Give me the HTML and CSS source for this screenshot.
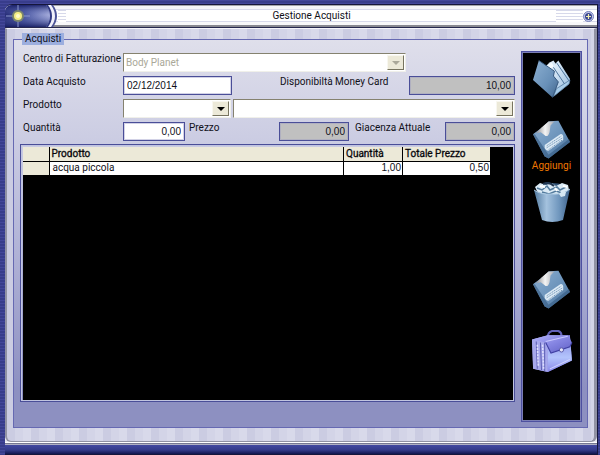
FILE: index.html
```html
<!DOCTYPE html>
<html lang="it">
<head>
<meta charset="utf-8">
<title>Gestione Acquisti</title>
<link rel="stylesheet" href="styles.css">
</head>
<body>
<svg class="defs" aria-hidden="true">
  <defs>
    <linearGradient id="steel" x1="0" y1="0" x2="1" y2="1">
      <stop offset="0" stop-color="#8db0d2"/><stop offset=".6" stop-color="#6890b8"/><stop offset="1" stop-color="#41658c"/>
    </linearGradient>
    <linearGradient id="paper" x1="0" y1="0" x2="1" y2="1">
      <stop offset="0" stop-color="#eef7ff"/><stop offset="1" stop-color="#92b9dc"/>
    </linearGradient>
    <linearGradient id="can" x1="0" y1="0" x2="1" y2="0">
      <stop offset="0" stop-color="#51799f"/><stop offset=".35" stop-color="#a4c2de"/><stop offset=".7" stop-color="#6f96bd"/><stop offset="1" stop-color="#3d618a"/>
    </linearGradient>
    <linearGradient id="shutter" x1="0" y1="0" x2="1" y2="0">
      <stop offset="0" stop-color="#8d8d92"/><stop offset=".5" stop-color="#f4f4f4"/><stop offset="1" stop-color="#a5a8b0"/>
    </linearGradient>
    <linearGradient id="leather" x1="0" y1="0" x2="1" y2="1">
      <stop offset="0" stop-color="#b4b4fb"/><stop offset=".5" stop-color="#8585e2"/><stop offset="1" stop-color="#5f5fc4"/>
    </linearGradient>
    <linearGradient id="front" x1="0" y1="0" x2="0" y2="1">
      <stop offset="0" stop-color="#8384e2"/><stop offset=".6" stop-color="#b3c4fc"/><stop offset="1" stop-color="#8a88ea"/>
    </linearGradient>
    <symbol id="floppy" viewBox="0 0 40 40">
      <path d="M1 14 L12 6 L17 1 L27 0 L39 22 L17 39 L13 37 Z" fill="url(#steel)"/>
      <path d="M1 14 L13 37 L17 39 L39 22 L38 19 L17 35 L3 14Z" fill="#385d85" opacity=".65"/>
      <path d="M10 7 L17 1 L23 1 L19 5 L18 12 Q16 18 13 15 L9 12 L4 13 Z" fill="url(#shutter)"/>
      <path d="M13 25 L29 14 Q31 13 32 16 L32 20 L17 31 Q14 31 13 28Z" fill="#dceaf5"/>
      <path d="M15 26 L30 16 M15 28 L31 18 M17 30 L31 20" stroke="#7799b8" stroke-width="1" stroke-dasharray="1.5 .7"/>
    </symbol>
  </defs>
</svg>
<div class="window">
  <header class="titlebar">
    <svg class="orb" viewBox="0 0 53 22" aria-hidden="true">
      <defs>
        <linearGradient id="orbfill" x1="0" y1="0" x2="1" y2="0">
          <stop offset="0" stop-color="#252b76"/><stop offset=".45" stop-color="#4e5ba5"/><stop offset="1" stop-color="#a6addc"/>
        </linearGradient>
        <linearGradient id="orbshade" x1="0" y1="0" x2="0" y2="1">
          <stop offset="0" stop-color="#161c64" stop-opacity=".9"/><stop offset=".45" stop-color="#6977be" stop-opacity="0"/><stop offset="1" stop-color="#141b60" stop-opacity=".9"/>
        </linearGradient>
      </defs>
      <path d="M0 0H48Q56 11 48 22H0Z" fill="#4b5397"/>
      <path d="M0 0H46Q54 11 46 22H0Z" fill="#f0f0fa"/>
      <path d="M0 0H43Q51 11 43 22H0Z" fill="#303982"/>
      <path d="M0 22V8Q1 0 8 0H41Q49 11 41 22Z" fill="url(#orbfill)"/>
      <path d="M0 22V8Q1 0 8 0H41Q49 11 41 22Z" fill="url(#orbshade)"/>
      <path d="M1 11H25M13 0V22" stroke="#8c98cb" stroke-width="1"/>
      <circle cx="13" cy="11" r="6" fill="#7b866f"/>
      <circle cx="13" cy="11" r="4" fill="#f5ee83"/>
      <circle cx="13" cy="11" r="2" fill="#fffcc9"/>
    </svg>
    <h1 class="title">Gestione Acquisti</h1>
    <button class="close" type="button" aria-label="Chiudi">
      <svg viewBox="0 0 11 11"><circle cx="5.500" cy="5.500" r="5" fill="#c4caea" stroke="#7780b8"/><circle cx="5.500" cy="5.500" r="3.500" fill="#39458f"/><path d="M3 5.500h5M5.500 3v5" stroke="#f4f0b0" stroke-width="1.200"/></svg>
    </button>
  </header>
  <main class="client">
    <fieldset class="panel">
      <legend>Acquisti</legend>
      <div class="columns">
        <div class="content">
          <form class="form">
            <div class="row">
              <label class="name" for="centro">Centro di Fatturazione</label>
              <span class="combo wide disabled"><select id="centro" disabled><option>Body Planet</option></select></span>
            </div>
            <div class="row">
              <label class="name" for="data">Data Acquisto</label>
              <input class="box date" id="data" value="02/12/2014">
              <label class="money" for="card">Disponibiltà Money Card</label>
              <input class="box number last" id="card" value="10,00" readonly>
            </div>
            <div class="row">
              <label class="name" for="codice">Prodotto</label>
              <span class="combo code"><select id="codice"><option></option></select></span>
              <span class="combo product"><select aria-label="Descrizione prodotto"><option></option></select></span>
            </div>
            <div class="row">
              <label class="name" for="qta">Quantità</label>
              <input class="box number quantity" id="qta" value="0,00">
              <label class="price" for="prezzo">Prezzo</label>
              <input class="box number amount" id="prezzo" value="0,00" readonly>
              <label class="stock" for="giacenza">Giacenza Attuale</label>
              <input class="box number last" id="giacenza" value="0,00" readonly>
            </div>
          </form>
          <div class="datagrid">
            <table>
              <colgroup><col class="c-mark"><col class="c-name"><col class="c-qty"><col class="c-total"></colgroup>
              <thead><tr><th></th><th>Prodotto</th><th>Quantità</th><th>Totale Prezzo</th></tr></thead>
              <tbody><tr><th></th><td>acqua piccola</td><td class="num">1,00</td><td class="num">0,50</td></tr></tbody>
            </table>
          </div>
        </div>
        <nav class="toolbar" aria-label="Comandi">
          <button type="button" aria-label="Apri">
            <svg viewBox="0 0 40 40">
              <path d="M13 8 L18 3 L22 1 L37 22 L22 37Z" fill="url(#paper)"/>
              <path d="M16 6 L20 3 L33 25 L22 36Z" fill="#f5fbff"/>
              <path d="M19 10 L27 1 L39 20 L38 25 L22 38Z" fill="url(#paper)"/>
              <path d="M25 3 L38 22 M22 8 L34 26" stroke="#4b7299" stroke-width="1"/>
              <path d="M22 38 L25 30 L39 21 L38 25Z" fill="#a9cde9" stroke="#456c92" stroke-width=".7"/>
              <path d="M7 1 L23 12 L22 17 L27 23 L21 39 L1 21Z" fill="url(#steel)"/>
              <path d="M7 1 L23 12 L22 17 L27 23 L21 39" fill="none" stroke="#34567c" stroke-width="1"/>
            </svg>
          </button>
          <button class="add" type="button">
            <svg viewBox="0 0 40 40"><use href="#floppy"/></svg>
            <span>Aggiungi</span>
          </button>
          <button class="trash" type="button" aria-label="Elimina">
            <svg viewBox="0 0 36 40">
              <ellipse cx="18" cy="7" rx="16" ry="6" fill="#315276"/>
              <path d="M1 5 L6 1 L12 3 L18 1 L22 4 L28 1 L34 3 L35 8 L31 13 H5Z" fill="#dbeaf5"/>
              <path d="M3 6 L8 8 L13 4 L16 8 L23 5 L26 8 L32 5 M8 10 L15 12 L22 9 L28 11" fill="none" stroke="#537b9d" stroke-width="1.500"/>
              <path d="M9 2 Q15 -1 20 4" fill="none" stroke="#20354f" stroke-width="2"/>
              <path d="M6 4 L11 5 M21 6 L23 9 M29 4 L33 5" stroke="#fff" stroke-width="2"/>
              <path d="M0 8 Q7 13 18 12 Q29 13 36 7 L29 38 Q18 42 8 38Z" fill="url(#can)"/>
              <path d="M0 8 Q7 13 18 12 Q29 13 36 7" fill="none" stroke="#a9c7e0" stroke-width="1"/>
              <path d="M25 12 Q28 8 32 10 L31 14 L27 15Z" fill="#d5e7f3"/>
            </svg>
          </button>
          <button class="save" type="button" aria-label="Salva">
            <svg viewBox="0 0 40 40"><use href="#floppy"/></svg>
          </button>
          <button class="exit" type="button" aria-label="Esci">
            <svg viewBox="0 0 40 40">
              <path d="M16 7 Q16 2 20 1 L26 1 Q29 2 29 5" fill="none" stroke="#6262b8" stroke-width="2"/>
              <path d="M1 9 L16 5 L37 5 L39 29 L16 40 L2 37Z" fill="url(#leather)"/>
              <path d="M1 9 L16 12 L16 40 L2 37Z" fill="#a7a8ec"/>
              <path d="M5 11 L6 37 M9 12 L10 38 M13 12 L13 39" stroke="#5f60b5" stroke-width="1"/>
              <path d="M6 14 L7 35 M11 14 L12 37" stroke="#dedffd" stroke-width="1.500" stroke-dasharray="2 1"/>
              <path d="M16 12 L37 5 L39 29 L16 40Z" fill="url(#front)"/>
              <path d="M1 9 L16 5 L35 5 L39 12 L37 16 L19 22 L14 12Z" fill="url(#leather)"/>
              <path d="M14 12 L19 22 L37 16 L39 12" fill="none" stroke="#3f3fa2" stroke-width="1"/>
              <path d="M14 11 L35 6" stroke="#c9c9ff" stroke-width="1"/>
              <circle cx="29" cy="19" r="2" fill="#e5e5f8" stroke="#4c4c9e" stroke-width=".8"/>
              <path d="M18 37 L37 28" stroke="#d2d5ff" stroke-width="1"/>
            </svg>
          </button>
        </nav>
      </div>
    </fieldset>
  </main>
</div>
</body>
</html>
```
FILE: styles.css
```css
* { box-sizing: border-box; }

body {
  margin: 0;
  min-height: 100vh;
  display: flex;
  padding: 4px 2px 0 5px;
  background: repeating-linear-gradient(#43479a 0 1px, #383d8b 1px 3px);
  font: 10px/12px Roboto, "Liberation Sans", sans-serif;
  color: #101018;
}

.defs { position: absolute; width: 0; height: 0; }

button { padding: 0; border: 0; background: none; font: inherit; }
svg { display: block; }

.window {
  flex: 1;
  display: flex;
  flex-direction: column;
  min-width: 0;
  border: solid #15163c;
  border-width: 1px 1px 1px 0;
  border-top-left-radius: 7px;
  overflow: hidden;
  background: #e8e8f0;
}
.window::after {
  content: "";
  height: 11px;
  border-top: 1px solid #fff;
  background: linear-gradient(#777994 0 1px, #b0b0c4 1px 2px, #4248a0 2px, #343b8a 7px, #11154e);
}

.titlebar {
  display: flex;
  align-items: center;
  height: 23px;
  padding-right: 3px;
  border-bottom: 1px solid #25274e;
  background: linear-gradient(#a5a5a8 0 1px, #f4f4f8 1px 4px, #d7d9ea 4px 5px, #fff 5px 16px, #d7d9ea 16px 17px, #f8f8fa 17px 20px, #888890 20px);
}
.orb { width: 53px; height: 22px; }
.title {
  flex: 1;
  margin: 0;
  padding-right: 18px;
  text-align: center;
  font-size: 10px;
  font-weight: normal;
  line-height: 12px;
  background:
    repeating-linear-gradient(#d7d9ea 0 1px, #fff 1px 3px) left / 8px 100% no-repeat,
    repeating-linear-gradient(#d7d9ea 0 1px, #fff 1px 3px) right / 27px 100% no-repeat;
}
.close { width: 11px; height: 11px; }

.client {
  flex: 1;
  display: flex;
  padding: 4px 6px 13px 6px;
  border: solid #9192a4;
  border-width: 1px 3px 1px 2px;
  border-top-color: #f4f4fa;
  border-radius: 0 0 6px 6px;
  background: repeating-linear-gradient(90deg, #cbcce2 0 8px, #d3d4e7 8px 16px, #d8d9ea 16px 24px);
}

.panel {
  flex: 1;
  display: flex;
  min-width: 0;
  margin: 0;
  padding: 6px 5px 5px 6px;
  border: 1px solid #6669b2;
  background: linear-gradient(#dfdfeb, #cccde3 25%, #b0b2d6 55%, #8d90c1 90%);
}
legend {
  margin-left: 2px;
  padding: 0 3px;
  line-height: 12px;
  background: #9caede;
}

.columns { flex: 1; display: flex; gap: 6px; min-width: 0; }
.content { flex: 1; display: flex; flex-direction: column; gap: 3px; min-width: 0; padding: 2px 0 20px; }
.form { display: flex; flex-direction: column; gap: 4px; padding-left: 3px; }
.row { display: flex; align-items: flex-start; height: 19px; }

.name { width: 100px; }
.money { width: 129px; margin-left: 48px; }
.price { width: 90px; margin-left: 4px; }
.stock { width: 90px; margin-left: 6px; }
.row > * { flex-shrink: 0; }
.date { width: 109px; }
.quantity { width: 62px; }
.amount { width: 70px; }
.row > .last { flex: 1; min-width: 0; }

.box {
  height: 19px;
  padding: 0 3px;
  border: 1px solid #4a4e98;
  outline: 0;
  background: #fff;
  box-shadow: inset 0 0 0 1px #d2d2e6;
  font: 10px/14px "Liberation Sans", sans-serif;
  color: #101018;
}
.box:read-only { background: #c0c0c0; box-shadow: inset 0 0 0 1px #b0b0c0; }
.number { text-align: right; }

.combo {
  position: relative;
  height: 19px;
  border: 1px solid;
  border-color: #85826f #f0f0ea #f0f0ea #85826f;
  background: #fff;
}
.combo select {
  display: block;
  width: 100%;
  height: 17px;
  padding: 0 18px 0 2px;
  border: 0;
  appearance: none;
  background: none;
  font: inherit;
  opacity: 1;
}
.combo select:disabled { color: #aaa899; }
.combo::before {
  content: "";
  position: absolute;
  top: 1px;
  right: 1px;
  bottom: 1px;
  width: 15px;
  border: 1px solid;
  border-color: #f8f7f0 #77745f #77745f #f8f7f0;
  background: #ece9d8;
}
.combo::after {
  content: "";
  position: absolute;
  top: 7px;
  right: 5px;
  border: 4px solid transparent;
  border-top-color: #000;
  border-bottom: 0;
}
.combo.disabled::after { border-top-color: #aaa899; }
.wide { width: 283px; }
.code { width: 108px; margin-right: 2px; }
.row > .product { flex: 1; }

.datagrid {
  flex: 1;
  border: 1px solid #4a4e98;
  padding: 2px 1px 1px 2px;
  background: #000 content-box;
  box-shadow: inset 0 0 0 1px #c0c4e0;
}
table { width: 468px; max-width: 100%; table-layout: fixed; border-collapse: collapse; }
.c-mark { width: 26px; }
.c-qty { width: 59px; }
.c-total { width: 88px; }
th, td {
  height: 14px;
  padding: 0 2px;
  border-right: 1px solid #000;
  border-bottom: 1px solid #000;
  line-height: 12px;
  text-align: left;
  font-weight: normal;
  background: #fff;
}
th { background: #ece9d8; -webkit-text-stroke: .3px #000; }
td:nth-child(2) { padding-left: 3px; }
.num { text-align: right; font: 10px/12px "Liberation Sans", sans-serif; padding-right: 1px; }

.toolbar {
  width: 61px;
  display: flex;
  flex-direction: column;
  align-items: center;
  padding-top: 7px;
  border: 1px solid #4d50a0;
  box-shadow: inset 0 0 0 1px #7b7eb5;
  background: #000;
}
.toolbar svg { width: 39px; height: 40px; margin: 0 auto; }
.toolbar .add { margin-top: 21px; color: #f07800; }
.toolbar .add span { display: block; }
.toolbar .trash { margin-top: 10px; }
.toolbar .trash svg { width: 36px; }
.toolbar .save { margin-top: 48px; }
.toolbar .exit { margin-top: 20px; }
.toolbar .exit svg { width: 42px; height: 42px; }
```
